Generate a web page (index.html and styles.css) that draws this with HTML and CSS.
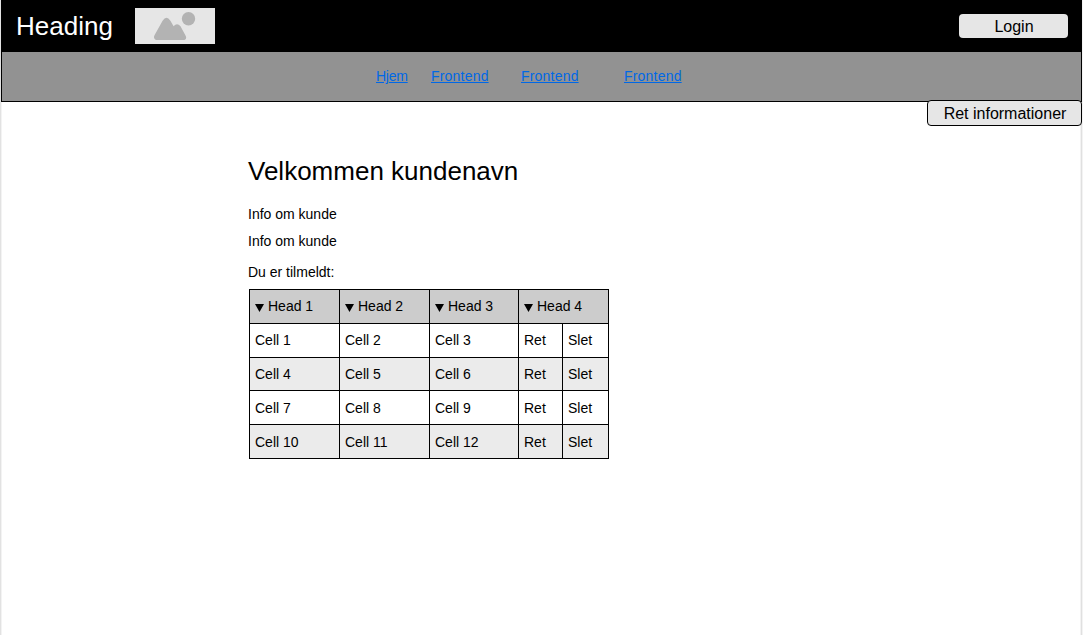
FILE: index.html
```html
<!DOCTYPE html>
<html lang="da">
<head>
<meta charset="utf-8">
<title>Kundeside</title>
<link rel="stylesheet" href="styles.css">
</head>
<body>
<div class="page">
  <header class="header">
    <div class="brand">Heading</div>
    <div class="logo">
      <svg width="80" height="36" viewBox="0 0 80 36" fill="#b3b3b3"><circle cx="53.5" cy="10.700" r="6.700"/><path d="M22.500 32C19.500 32 18.200 29.700 19.500 27.200L27.600 12.700Q31.500 7 35.400 12.700L38.600 18.300Q42 14 45.500 18.300L50.500 27.500C52 30 50.800 32 48.500 32Z"/></svg>
    </div>
    <button class="button login">Login</button>
  </header>
  <nav class="nav">
    <a href="#" class="home">Hjem</a>
    <a href="#">Frontend</a>
    <a href="#" class="middle">Frontend</a>
    <a href="#" class="last">Frontend</a>
  </nav>
  <div class="actions"><button class="button edit">Ret informationer</button></div>
  <main class="main">
    <h1 class="title">Velkommen kundenavn</h1>
    <p class="info">Info om kunde</p>
    <p class="info">Info om kunde</p>
    <p class="signed">Du er tilmeldt:</p>
    <div class="table">
      <div class="cell head"><svg class="sort" viewBox="0 0 9 8"><path d="M0 0H9L4.500 8Z"/></svg>Head 1</div>
      <div class="cell head"><svg class="sort" viewBox="0 0 9 8"><path d="M0 0H9L4.500 8Z"/></svg>Head 2</div>
      <div class="cell head"><svg class="sort" viewBox="0 0 9 8"><path d="M0 0H9L4.500 8Z"/></svg>Head 3</div>
      <div class="cell head wide"><svg class="sort" viewBox="0 0 9 8"><path d="M0 0H9L4.500 8Z"/></svg>Head 4</div>
      <div class="cell first">Cell 1</div><div class="cell first">Cell 2</div><div class="cell first">Cell 3</div><div class="cell first">Ret</div><div class="cell first">Slet</div>
      <div class="cell alt">Cell 4</div><div class="cell alt">Cell 5</div><div class="cell alt">Cell 6</div><div class="cell alt">Ret</div><div class="cell alt">Slet</div>
      <div class="cell">Cell 7</div><div class="cell">Cell 8</div><div class="cell">Cell 9</div><div class="cell">Ret</div><div class="cell">Slet</div>
      <div class="cell alt">Cell 10</div><div class="cell alt">Cell 11</div><div class="cell alt">Cell 12</div><div class="cell alt">Ret</div><div class="cell alt">Slet</div>
    </div>
  </main>
</div>
</body>
</html>
```
FILE: styles.css
```css
* { box-sizing: border-box; }
body {
  margin: 0;
  background: #f3f3f3;
  color: #000;
  font: 14px/16px "Liberation Sans", Arial, sans-serif;
  overflow: hidden;
}
.page {
  height: 635px;
  margin-right: 1px;
  border-left: 1px solid #e2e2e2;
  background: linear-gradient(to right, #f3f3f3 1px, #fff 1px, #fff calc(100% - 2px), #f3f3f3 calc(100% - 2px), #f3f3f3 calc(100% - 1px), #e0e0e0 calc(100% - 1px));
}
.header {
  display: flex;
  align-items: center;
  height: 52px;
  padding: 0 14px 0 15px;
  background: #000;
}
.brand {
  width: 119px;
  color: #fff;
  font-size: 26px;
  line-height: 30px;
}
.logo { width: 80px; height: 36px; background: #e6e6e6; }
.logo svg { display: block; }
.button {
  padding: 2px 0 0 1px;
  border: 0;
  border-radius: 4px;
  background: #e6e6e6;
  color: #000;
  font: 16px/22px "Liberation Sans", Arial, sans-serif;
}
.login { width: 109px; height: 24px; margin-left: auto; }
.nav {
  display: flex;
  height: 50px;
  padding: 16px 0 0 374px;
  border: solid #000;
  border-width: 0 1px 1px;
  background: #929292;
}
.nav a {
  width: 58px;
  margin-right: 32px;
  color: #0068e6;
  letter-spacing: 0.2px;
  text-underline-offset: 1px;
}
.nav .home { width: 31px; margin-right: 24px; letter-spacing: -0.25px; }
.nav .middle { margin-right: 45px; }
.nav .last { margin-right: 0; }
.actions { display: flex; justify-content: flex-end; height: 24px; margin-top: -2px; }
.edit { width: 155px; height: 26px; border: 1px solid #000; }
.main { padding: 32px 0 0 247px; }
.title { margin: 0 0 20px; font-size: 26px; font-weight: 400; line-height: 30px; }
.info { margin: 0 0 11px; }
.signed { margin: 15px 0 9px; }
.table {
  display: grid;
  grid-template-columns: 89px 89px 88px 43px 45px;
  grid-template-rows: 33px 33px 32px 33px 33px;
  gap: 1px;
  width: 360px;
  margin-left: 1px;
  padding: 1px;
  background: #000;
}
.cell { display: flex; align-items: center; padding-left: 5px; background: #fff; }
.first { padding-bottom: 1px; }
.alt { background: #ebebeb; }
.head { padding-bottom: 1px; background: #ccc; }
.wide { grid-column: span 2; }
.sort { width: 9px; height: 8px; margin: 4px 4px 0 0; }
```
